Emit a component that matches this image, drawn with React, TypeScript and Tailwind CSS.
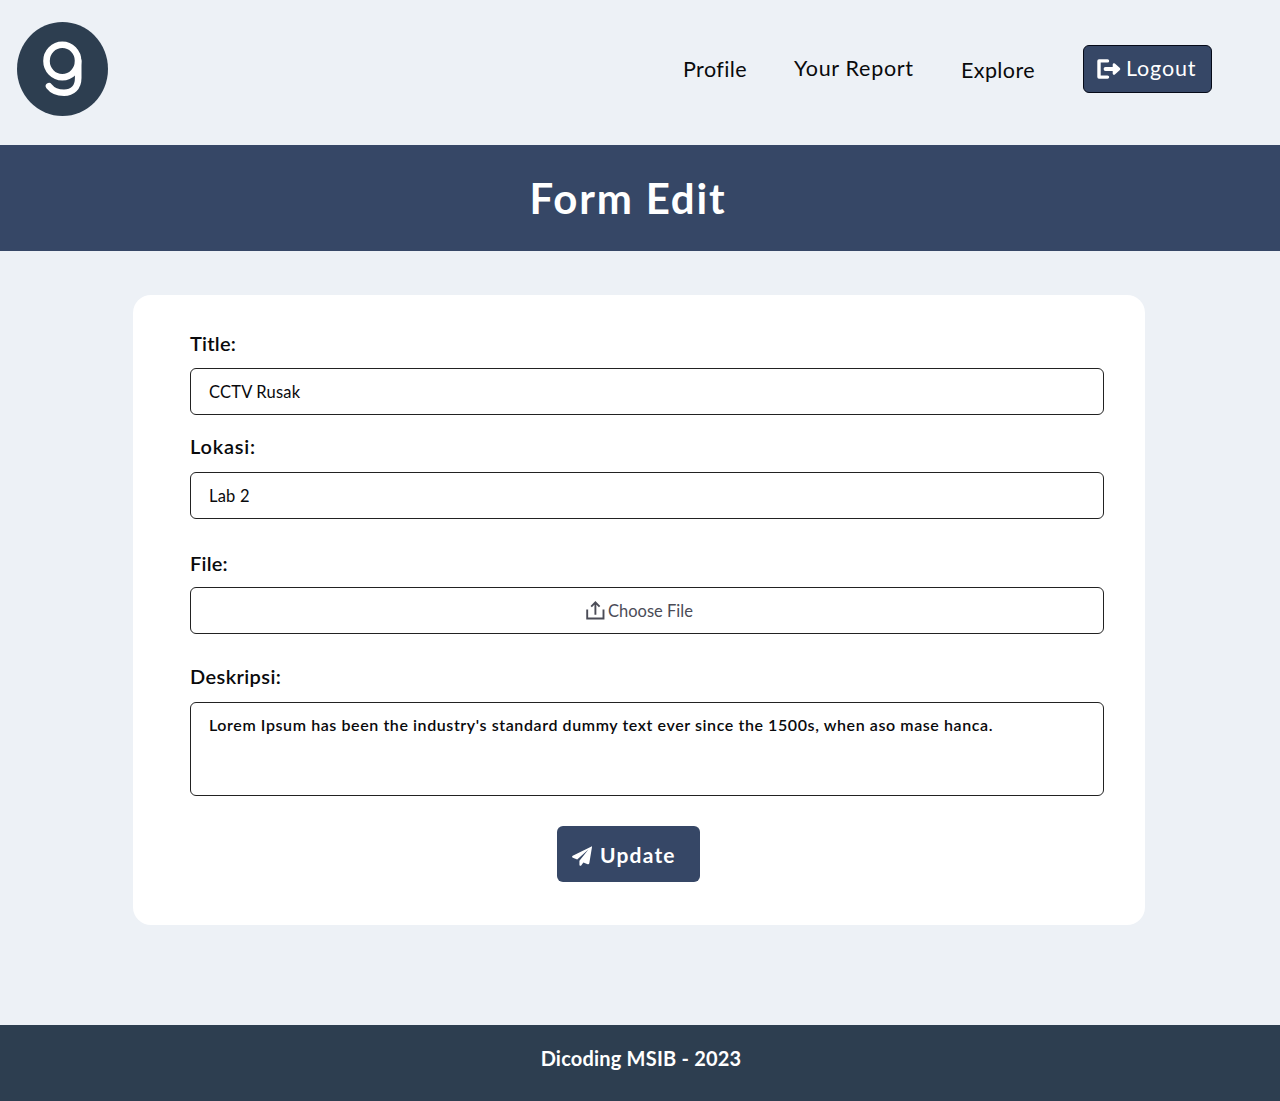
import type { ReactNode } from "react";

function Logo() {
  return (
    <svg className="h-[94px] w-[92px]" viewBox="0 0 92 94" fill="none" aria-label="g">
      <ellipse cx="46.5" cy="47" rx="45.5" ry="47" fill="#2d3e50" />
      <g stroke="#fff" strokeWidth="6.6" strokeLinecap="round">
        <ellipse cx="46.3" cy="39" rx="15.800" ry="16.2" />
        <path d="M62.200 39v17c0 9.500-6 14.700-14.200 14.700-6.500 0-11.500-2-15-6.500" />
      </g>
    </svg>
  );
}

function LogoutIcon() {
  return (
    <svg className="h-5 w-6 shrink-0" viewBox="0 0 24 20" fill="none">
      <path d="M10.500 1.900H2v16.200h8.500" stroke="#fff" strokeWidth="3.4" strokeLinecap="round" strokeLinejoin="round" />
      <path d="M8.500 10H19" stroke="#fff" strokeWidth="3.800" strokeLinecap="round" />
      <path d="M17 5.500 22 10l-5 4.500z" fill="#fff" stroke="#fff" strokeWidth="2.600" strokeLinejoin="round" />
    </svg>
  );
}

function ShareIcon() {
  return (
    <svg className="h-[19px] w-[19px] shrink-0" viewBox="0 0 19 19" fill="none" stroke="#4b4c57" strokeWidth="1.900">
      <path d="M1.200 8.500v9h16.300v-9" />
      <path d="M9.400 13.800V1.800M5.200 5.600l4.200-4.200 4.200 4.200" />
    </svg>
  );
}

function PlaneIcon() {
  return (
    <svg className="mt-1 h-5 w-5 shrink-0" viewBox="0 0 512 512" fill="#fff">
      <path d="M500 10 18 250c-24 14-20 44 3 53l112 40L420 90 190 375v105c0 26 30 36 46 16l55-75 110 46c20 8 38-4 42-24L512 28c2-14-2-24-12-18z" />
    </svg>
  );
}

function Label({ children, className }: { children: ReactNode; className: string }) {
  return <label className={`block h-7 text-[20px] leading-7 font-semibold ${className}`}>{children}</label>;
}

const field = "flex h-[47px] w-full items-center rounded-md border border-[#222]";

export default function App() {
  return (
    <div className="flex h-[1101px] w-[1280px] flex-col overflow-hidden bg-[#edf1f6] font-['Lato',sans-serif] text-[#090a0c]">
      <header className="flex h-[145px] shrink-0 items-start pt-[22px] pl-4">
        <Logo />
        <nav className="mt-[23px] ml-auto flex h-12 items-center pr-[68px] text-[21.5px] leading-7 whitespace-nowrap">
          <a className="w-[111px] pb-px tracking-[0.4px]">Profile</a>
          <a className="w-[167px] pb-[2px] tracking-[0.7px]">Your Report</a>
          <a className="w-[122px] pt-[2px] tracking-[0.4px]">Explore</a>
          <button className="flex h-12 w-[129px] items-center rounded-md border border-[#050a18] bg-[#364766] pl-[13px] text-white">
            <LogoutIcon />
            <span className="ml-[5px] pb-[2px] tracking-[0.85px]">Logout</span>
          </button>
        </nav>
      </header>

      <section className="flex h-[106px] shrink-0 items-center justify-center bg-[#364766] pr-6">
        <h1 className="text-[42px] leading-[50px] font-bold tracking-[1.8px] text-white">Form Edit</h1>
      </section>

      <main className="mt-11 ml-[133px] flex h-[630px] w-[1012px] shrink-0 flex-col rounded-[18px] bg-white pt-[34px] pr-[41px] pl-[57px]">
        <Label className="tracking-[0.25px]">Title:</Label>
        <div className={`${field} mt-[11px] pl-[18px] text-[16.5px]`}>
          <span className="pt-[2px] tracking-[0.2px]">CCTV Rusak</span>
        </div>
        <Label className="mt-[17px] tracking-[0.8px]">Lokasi:</Label>
        <div className={`${field} mt-[12px] pl-[18px] text-[16.5px]`}>
          <span className="pt-[2px] tracking-[0.2px]">Lab 2</span>
        </div>
        <Label className="mt-[30px] tracking-[0.2px]">File:</Label>
        <div className={`${field} mt-[10px] pl-[395px] text-[16.5px] text-[#4b4c57]`}>
          <ShareIcon />
          <span className="ml-[3px] pt-[2px]">Choose File</span>
        </div>
        <Label className="mt-[28px] tracking-[0.4px]">Deskripsi:</Label>
        <div className="mt-[12px] h-[94px] w-full rounded-md border border-[#222] pt-[12px] pl-[18px] text-[16px] leading-5 font-semibold whitespace-nowrap">
          <span className="tracking-[0.59px]">
            Lorem Ipsum has been the industry's standard dummy text ever since the 1500s, when aso mase hanca.
          </span>
        </div>
        <button className="mt-[30px] ml-[367px] flex h-14 w-[143px] items-center rounded-md bg-[#364766] pl-[15px] text-[21px] leading-7 font-bold text-white">
          <PlaneIcon />
          <span className="ml-2 pt-[2px] tracking-[1.2px]">Update</span>
        </button>
      </main>

      <footer className="mt-auto flex h-[76px] shrink-0 justify-center bg-[#2d3e50] pt-[19px] pl-[2px] text-[20px] leading-7 font-bold text-white">
        <span className="tracking-[0.2px]">Dicoding MSIB - 2023</span>
      </footer>
    </div>
  );
}
